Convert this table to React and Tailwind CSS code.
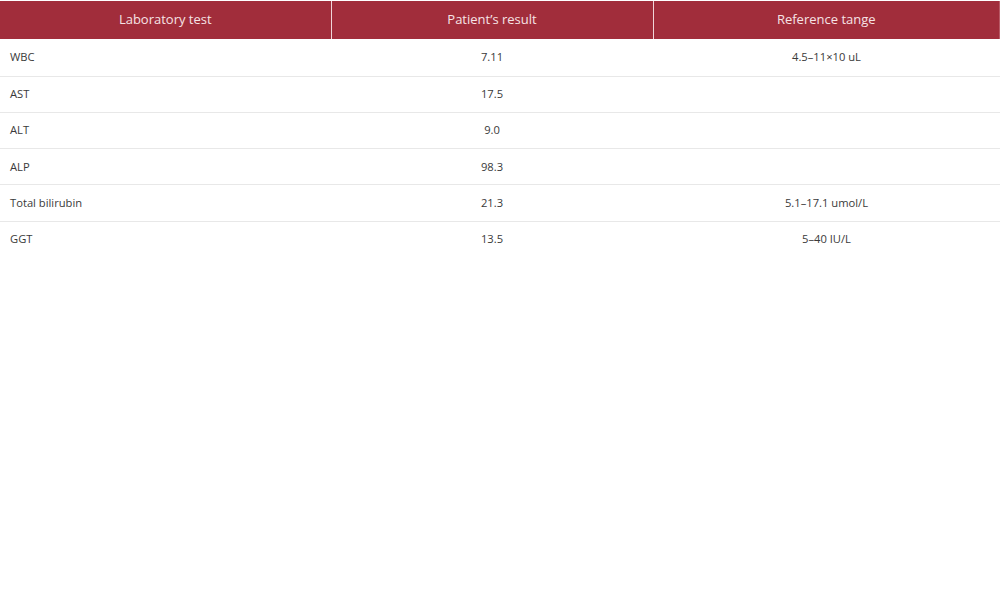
const rows = [
  ["WBC", "7.11", "4.5–11×10 uL"],
  ["AST", "17.5", ""],
  ["ALT", "9.0", ""],
  ["ALP", "98.3", ""],
  ["Total bilirubin", "21.3", "5.1–17.1 umol/L"],
  ["GGT", "13.5", "5–40 IU/L"],
];

const App = () => {
  return (
    <div className="w-[1000px] h-[600px] bg-white font-['Open_Sans',sans-serif]">
      <table className="w-full border-collapse table-fixed mt-px">
        <colgroup>
          <col className="w-[331px]" />
          <col className="w-[322px]" />
          <col className="w-[347px]" />
        </colgroup>
        <thead>
          <tr className="bg-[#a12d3b] text-[#f6e3e5] text-[13px] h-[38px]">
            <th className="font-normal border-r border-[#f0d5d8]">Laboratory test</th>
            <th className="font-normal border-r border-[#f0d5d8]">Patient’s result</th>
            <th className="font-normal border-r-2 border-[#b85a66]">Reference tange</th>
          </tr>
        </thead>
        <tbody className="text-[11.2px] text-[#3a3a3a]">
          {rows.map((r, i) => (
            <tr
              key={r[0]}
              className={
                (i === 0 ? "h-[37px]" : "h-[36.25px]") +
                (i < rows.length - 1 ? " border-b border-[#e8e8e8]" : "")
              }
            >
              <td className="pl-[10px] pt-px">{r[0]}</td>
              <td className="text-center pt-px">{r[1]}</td>
              <td className="text-center pt-px">{r[2]}</td>
            </tr>
          ))}
        </tbody>
      </table>
    </div>
  );
};

export default App;
